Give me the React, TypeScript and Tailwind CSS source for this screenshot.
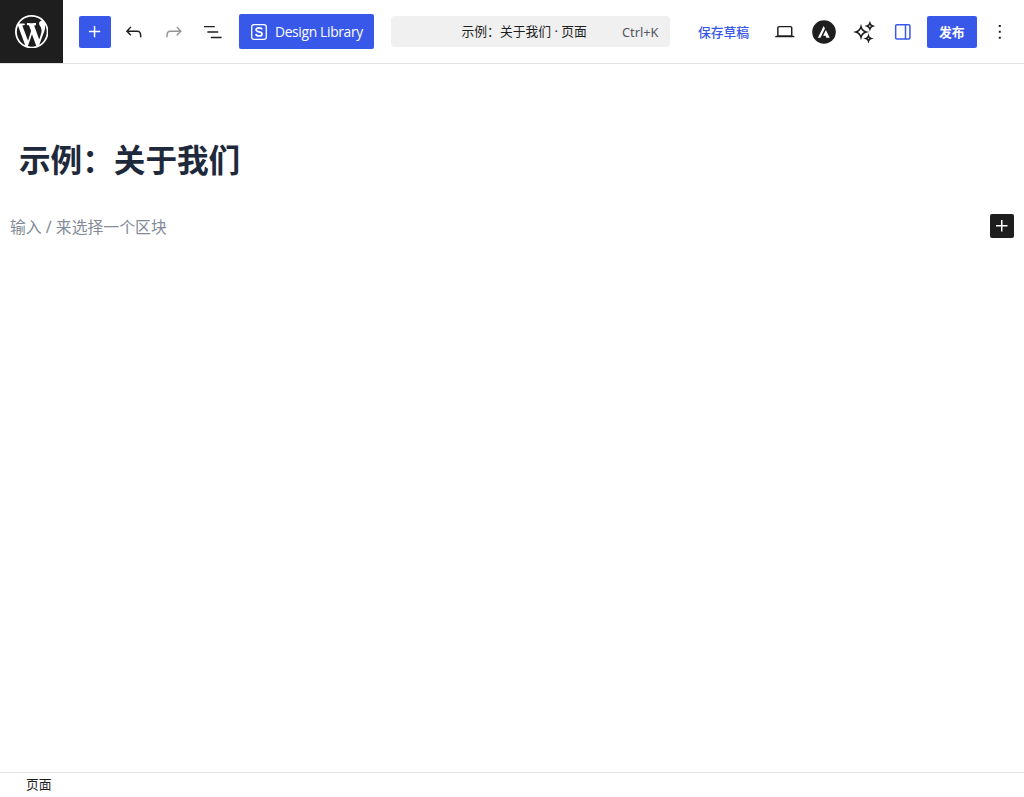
import type { ReactNode } from "react";

const Icon = ({ d, size = 23.6 }: { d: string; size?: number }) => (
  <svg width={size} height={size} viewBox="0 0 24 24" fill="currentColor" className="shrink-0">
    <path d={d} />
  </svg>
);

const icons = {
  plus: "M11 12.5V17.5H12.5V12.5H17.5V11H12.5V6H11V11H6V12.5H11Z",
  undo: "M18.3 11.7c-.6-.6-1.4-.9-2.3-.9H6.7l2.9-3.3-1.1-1-4.5 5L8.5 16l1-1-2.7-2.7H16c.5 0 .9.2 1.3.5 1 1 1 3.4 1 4.5v.3h1.5v-.2c0-1.5 0-4.3-1.5-5.7z",
  redo: "M15.6 6.5l-1.1 1 2.9 3.3H8c-.9 0-1.7.3-2.3.9-1.4 1.5-1.4 4.2-1.4 5.6v.2h1.5v-.3c0-1.1 0-3.5 1-4.5.3-.3.7-.5 1.3-.5h9.2L14.5 15l1.1 1.1 4.6-4.6-4.6-5z",
  listView: "M3 6h11v1.5H3V6Zm3.5 5.5h11V13h-11v-1.5ZM21 17H10v1.5h11V17Z",
  desktop: "M20.5 16h-.7V8c0-1.1-.9-2-2-2H6.2c-1.1 0-2 .9-2 2v8h-.7c-.8 0-1.5.7-1.5 1.5h20c0-.8-.7-1.5-1.5-1.5zM5.7 8c0-.3.2-.5.5-.5h11.6c.3 0 .5.2.5.5v7.6H5.7V8z",
  drawer: "M18 4H6c-1.1 0-2 .9-2 2v12c0 1.1.9 2 2 2h12c1.1 0 2-.9 2-2V6c0-1.1-.9-2-2-2zm-4 14.5H6c-.3 0-.5-.2-.5-.5V6c0-.3.2-.5.5-.5h8v13zm4.5-.5c0 .3-.2.5-.5.5h-2.5v-13H18c.3 0 .5.2.5.5v12z",
  more: "M13 19h-2v-2h2v2zm0-6h-2v-2h2v2zm0-6h-2V5h2v2z",
};

const WordPressLogo = () => (
  <svg width="33.5" height="33.5" viewBox="0 0 20 20" fill="#fff">
    <path d="M20 10c0-5.51-4.49-10-10-10C4.48 0 0 4.49 0 10c0 5.52 4.48 10 10 10 5.51 0 10-4.48 10-10zM7.78 15.37L4.37 6.22c.55-.02 1.17-.08 1.17-.08.5-.06.44-1.13-.06-1.11 0 0-1.45.11-2.37.11-.18 0-.37 0-.58-.01C4.12 2.69 6.87 1.11 10 1.11c2.33 0 4.45.87 6.05 2.34-.68-.11-1.65.39-1.65 1.58 0 .74.45 1.36.9 2.1.35.61.55 1.36.55 2.46 0 1.49-1.4 5-1.4 5l-3.03-8.37c.54-.02.82-.17.82-.17.5-.05.44-1.25-.06-1.22 0 0-1.44.12-2.38.12-.87 0-2.33-.12-2.33-.12-.5-.03-.56 1.2-.06 1.22l.92.08 1.26 3.41zM17.41 10c.24-.64.74-1.87.43-4.25.7 1.29 1.05 2.71 1.05 4.25 0 3.29-1.73 6.24-4.4 7.78.97-2.59 1.94-5.2 2.92-7.78zM6.1 18.09C3.12 16.65 1.11 13.53 1.11 10c0-1.3.23-2.48.72-3.59C3.25 10.3 4.67 14.2 6.1 18.09zm4.03-6.63l2.58 6.98c-.86.29-1.76.45-2.71.45-.79 0-1.57-.11-2.29-.33.81-2.38 1.62-4.74 2.42-7.1z" />
  </svg>
);

const LibraryLogo = () => (
  <svg width="16" height="16" viewBox="0 0 16 16" fill="none" stroke="#fff">
    <rect x="0.7" y="0.7" width="14.6" height="14.6" rx="2.4" strokeWidth="1.3" />
    <path d="M11 5.5C10.7 4.3 9.6 3.9 8 3.9c-1.8 0-2.9.7-2.9 1.9 0 3 6 1.2 6 4.2 0 1.3-1.2 2-3 2-1.900 0-3-.7-3.200-2" strokeWidth="1.7" />
  </svg>
);

const AstraLogo = () => (
  <svg width="24" height="24" viewBox="0 0 24 24">
    <circle cx="12" cy="12" r="11.8" fill="#1e1e1e" />
    <path d="M11.7 6.1 5.9 17.8h2.5l4.5-9.2z" fill="#fff" />
    <path d="m13.9 10.1-2.8 5.6h2.4l.9 2.1h3.3z" fill="#fff" />
  </svg>
);

const Sparkles = () => (
  <svg width="22" height="22" viewBox="0 0 22 22" fill="none" stroke="#1e1e1e" strokeWidth="1.6" strokeLinejoin="miter">
    <path d="M8 5.800c.9 3.300 1.900 4.300 5.200 5.200-3.300.9-4.300 1.900-5.200 5.200-.9-3.300-1.900-4.300-5.200-5.200 3.300-.9 4.300-1.900 5.200-5.200z" />
    <path d="M16.900 2.200c.6 1.800 1.100 2.300 2.900 2.900-1.800.6-2.300 1.100-2.900 2.900-.6-1.800-1.100-2.300-2.900-2.900 1.800-.6 2.300-1.100 2.900-2.900z" />
    <path d="M15.500 15c.5 1.600.9 2 2.500 2.500-1.600.5-2 .9-2.500 2.500-.5-1.600-.9-2-2.500-2.500 1.600-.5 2-.9 2.500-2.500z" />
  </svg>
);

const ToolButton = ({ children, className = "" }: { children: ReactNode; className?: string }) => (
  <button className={`flex h-8 w-[31.5px] shrink-0 items-center justify-center ${className}`}>{children}</button>
);

export default function App() {
  return (
    <div className="flex h-screen flex-col overflow-hidden bg-white font-['Noto_Sans','Noto_Sans_CJK_SC',sans-serif] text-[#1e1e1e]">
      {/* Top toolbar */}
      <header className="flex h-16 shrink-0 items-start border-b border-[#e0e0e0]">
        <div className="flex h-[63px] w-[63px] shrink-0 items-center justify-center bg-[#1e1e1e]">
          <WordPressLogo />
        </div>

        <div className="flex h-[63px] flex-1 items-center pl-4">
          <div className="flex items-center gap-2">
            <ToolButton className="rounded-[2px] bg-[#3858e9] text-white"><Icon d={icons.plus} /></ToolButton>
            <ToolButton><Icon d={icons.undo} /></ToolButton>
            <ToolButton className="text-[#949494]"><Icon d={icons.redo} /></ToolButton>
            <ToolButton><Icon d={icons.listView} /></ToolButton>
          </div>

          <button className="ml-[10px] flex h-[35px] w-[134.5px] shrink-0 items-center rounded-[2px] bg-[#3858e9] pl-3 text-white">
            <LibraryLogo />
            <span className="ml-2 whitespace-nowrap pt-0.5 font-['Open_Sans',sans-serif] text-[13.8px] tracking-[-0.32px]">Design Library</span>
          </button>

          <div className="ml-[17.5px] flex h-[31.5px] w-[279px] shrink-0 items-center rounded-[4px] bg-[#f0f0f0] pl-[70.5px] pr-[11.5px] text-[12.8px]">
            <span className="whitespace-nowrap">示例：关于我们&nbsp;·&nbsp;页面</span>
            <span className="ml-auto pt-0.5 text-[#50575e]">Ctrl+K</span>
          </div>

          <button className="ml-[27.5px] w-[52px] shrink-0 whitespace-nowrap pt-0.5 text-[12.8px] font-medium text-[#3858e9]">
            保存草稿
          </button>

          <div className="ml-[19.5px] flex items-center gap-2">
            <ToolButton><Icon d={icons.desktop} /></ToolButton>
            <ToolButton><AstraLogo /></ToolButton>
            <ToolButton><Sparkles /></ToolButton>
            <ToolButton className="text-[#3858e9]"><Icon d={icons.drawer} /></ToolButton>
            <button className="flex h-8 w-[49.5px] items-center justify-center rounded-[2px] bg-[#3858e9] pt-0.5 text-[12.8px] font-bold text-white">
              发布
            </button>
            <ToolButton><Icon d={icons.more} /></ToolButton>
          </div>
        </div>
      </header>

      {/* Editor canvas */}
      <main className="flex-1">
        <h1 className="pl-[19px] pt-[72px] text-[31.6px] font-bold leading-[48px] text-[#1e293b]">示例：关于我们</h1>
        <div className="mt-[30px] flex h-6 items-center justify-between px-[10px]">
          <p className="pt-1 text-[15.85px] text-[#838a97]">输入 / 来选择一个区块</p>
          <button className="flex size-6 items-center justify-center rounded-[2px] bg-[#1e1e1e] text-white">
            <Icon d={icons.plus} size={24} />
          </button>
        </div>
      </main>

      <footer className="flex h-[25px] shrink-0 items-center border-t border-[#e4e4e4] pl-[26px] text-[12.8px]">
        页面
      </footer>
    </div>
  );
}
